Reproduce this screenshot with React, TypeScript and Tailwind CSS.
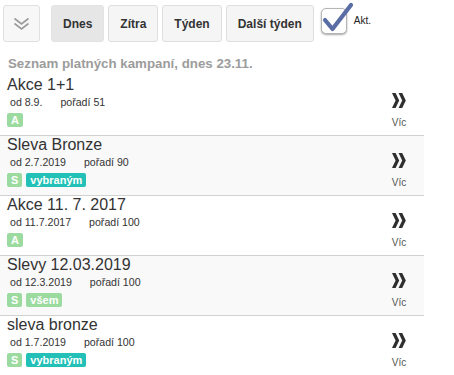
import React from "react";

type Badge = { label: string; tone: "green" | "teal" };

type Campaign = {
  title: string;
  from: string;
  order: number;
  badges: Badge[];
};

const campaigns: Campaign[] = [
  { title: "Akce 1+1", from: "od 8.9.", order: 51, badges: [{ label: "A", tone: "green" }] },
  {
    title: "Sleva Bronze",
    from: "od 2.7.2019",
    order: 90,
    badges: [
      { label: "S", tone: "green" },
      { label: "vybraným", tone: "teal" },
    ],
  },
  { title: "Akce 11. 7. 2017", from: "od 11.7.2017", order: 100, badges: [{ label: "A", tone: "green" }] },
  {
    title: "Slevy 12.03.2019",
    from: "od 12.3.2019",
    order: 100,
    badges: [
      { label: "S", tone: "green" },
      { label: "všem", tone: "green" },
    ],
  },
  {
    title: "sleva bronze",
    from: "od 1.7.2019",
    order: 100,
    badges: [
      { label: "S", tone: "green" },
      { label: "vybraným", tone: "teal" },
    ],
  },
];

const periods = ["Dnes", "Zítra", "Týden", "Další týden"];

function DoubleDown() {
  return (
    <svg width="17" height="14" viewBox="0 0 17 14" fill="none">
      <polyline points="1.5,1.5 8.5,7 15.5,1.5" stroke="#9a9a9a" strokeWidth="1.6" />
      <polyline points="1.5,6.5 8.5,12 15.5,6.5" stroke="#9a9a9a" strokeWidth="1.6" />
    </svg>
  );
}

function DoubleRight() {
  return (
    <svg width="14" height="15" viewBox="0 0 14 15">
      <polygon points="0,0 3.6,0 7.2,7.5 3.6,15 0,15 3.6,7.5" fill="#2f2f2f" />
      <polygon points="6.6,0 10.2,0 13.8,7.5 10.2,15 6.6,15 10.2,7.5" fill="#2f2f2f" />
    </svg>
  );
}

function Checkbox() {
  return (
    <div className="relative mt-[3px] h-[26px] w-[26px] rounded-[5px] border border-[#b5b5b5] bg-white shadow-[0_1px_2px_rgba(0,0,0,0.35)]">
      <svg
        className="absolute left-0 top-[-9px]"
        width="32"
        height="36"
        viewBox="0 0 32 36"
        fill="none"
      >
        <polyline
          points="3,20 10.5,29 29,5"
          stroke="#5a6ca4"
          strokeWidth="4.2"
          strokeLinecap="round"
          strokeLinejoin="round"
        />
      </svg>
    </div>
  );
}

export default function App() {
  return (
    <div className="min-h-[375px] bg-white font-['Liberation_Sans',Arial,sans-serif] text-[#333]">
      <div className="flex items-start pl-[3px] pt-[5px]">
        <button
          type="button"
          className="mr-[11px] flex h-[37px] w-[37px] items-center justify-center rounded-[3px] border border-[#e0e0e0] bg-[#f7f7f7]"
        >
          <DoubleDown />
        </button>
        <div className="flex gap-[4px]">
          {periods.map((p, i) => (
            <button
              key={p}
              type="button"
              className={
                i === 0
                  ? "h-[37px] rounded-[3px] border border-[#e3e3e3] bg-[#e6e6e6] px-[11px] text-[12px] font-bold text-[#333]"
                  : "h-[37px] rounded-[3px] border border-[#dedede] bg-[#f5f5f5] px-[11px] text-[12px] font-bold text-[#333]"
              }
            >
              {p}
            </button>
          ))}
        </div>
        <div className="ml-[7px] flex items-start">
          <Checkbox />
          <span className="ml-[7px] mt-[10px] text-[10px] leading-[12px] text-[#222]">Akt.</span>
        </div>
      </div>

      <div className="mb-[4px] mt-[14px] pl-[8px] text-[13.3px] font-bold leading-[16px] text-[#9c9c9c]">
        Seznam platných kampaní, dnes 23.11.
      </div>

      <div className="w-[424px]">
        {campaigns.map((c, i) => (
          <div
            key={c.title}
            className={
              i % 2 === 1
                ? "flex h-[60px] border-b border-[#d2d2d2] bg-[#f9f9f9]"
                : "flex h-[60px] border-b border-[#d2d2d2] bg-white"
            }
          >
            <div className="flex-1 pl-[7px]">
              <div className="text-[16px] leading-[18px] text-[#333]">{c.title}</div>
              <div className="mt-[2px] flex pl-[3px] text-[10.6px] leading-[13px] text-[#333]">
                <span>{c.from}</span>
                <span className="ml-[18px]">pořadí {c.order}</span>
              </div>
              <div className="mt-[4px] flex gap-[4px]">
                {c.badges.map((b) => (
                  <span
                    key={b.label}
                    className={
                      b.tone === "teal"
                        ? "h-[14px] rounded-[2px] bg-[#22c0b6] px-[4px] text-[11px] font-bold leading-[14px] text-white"
                        : "h-[14px] rounded-[2px] bg-[#9bdb9f] px-[4px] text-[11px] font-bold leading-[14px] text-white"
                    }
                  >
                    {b.label}
                  </span>
                ))}
              </div>
            </div>
            <div className="mr-[10px] flex w-[30px] flex-col items-center pt-[17px]">
              <DoubleRight />
              <span className="mt-[9px] text-[10px] leading-[12px] text-[#555]">Víc</span>
            </div>
          </div>
        ))}
      </div>
    </div>
  );
}
